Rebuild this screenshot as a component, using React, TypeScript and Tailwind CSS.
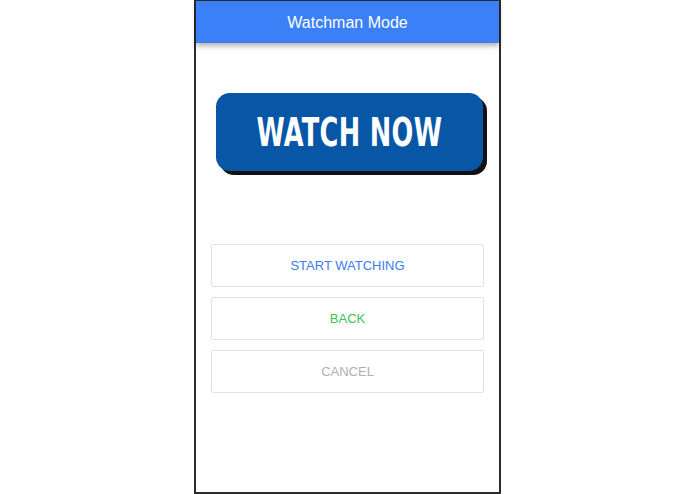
import React from 'react';

const buttons = [
  { label: 'START WATCHING', color: 'text-[#3d7bf0]' },
  { label: 'BACK', color: 'text-[#3cc45c]' },
  { label: 'CANCEL', color: 'text-[#b0b0b0]' },
];

export default function App() {
  return (
    <div className="w-[695px] h-[494px] bg-white flex justify-center font-['Liberation_Sans',Arial,sans-serif]">
      <div className="w-[307px] h-[494px] border-2 border-t border-[#2b2b2b] bg-white flex flex-col">
        {/* Header */}
        <header className="h-[42px] pt-[2px] bg-[#3b80f6] flex items-center justify-center shadow-[0_3px_5px_rgba(0,0,0,0.3)] relative z-10">
          <h1 className="text-white text-[16px] leading-none">Watchman Mode</h1>
        </header>

        {/* Watch now banner */}
        <div className="pl-[20px] pr-[14px] mt-[50px]">
          <div className="h-[78px] w-[267px] rounded-[14px] bg-[#0757a6] shadow-[4px_4px_0_#111] flex items-center justify-center">
            <span className="text-white font-bold text-[39px] tracking-[0.5px] leading-none scale-x-[0.73] font-['DejaVu_Sans_Condensed','Liberation_Sans',sans-serif]">
              WATCH NOW
            </span>
          </div>
        </div>

        {/* Actions */}
        <div className="px-[15px] mt-[73px] flex flex-col gap-[10px]">
          {buttons.map((b) => (
            <button
              key={b.label}
              className={`h-[43px] w-full border border-[#e2e2e2] rounded-[2px] bg-white text-[13px] ${b.color}`}
            >
              {b.label}
            </button>
          ))}
        </div>
      </div>
    </div>
  );
}
